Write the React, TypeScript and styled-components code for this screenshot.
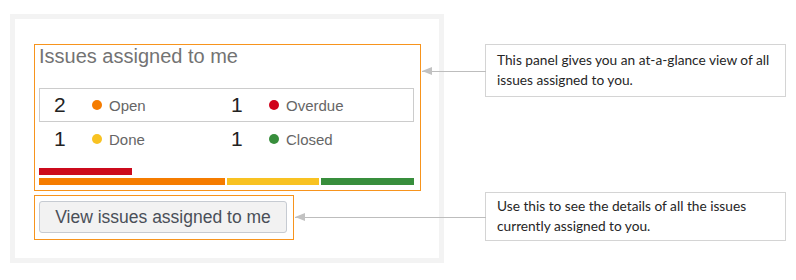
import React from "react";
import styled, { createGlobalStyle } from "styled-components";

interface Stat {
  count: number;
  label: string;
  color: string;
}

const rows: Stat[][] = [
  [
    { count: 2, label: "Open", color: "#f57c00" },
    { count: 1, label: "Overdue", color: "#d0021b" },
  ],
  [
    { count: 1, label: "Done", color: "#f8c222" },
    { count: 1, label: "Closed", color: "#388e3c" },
  ],
];

const App: React.FC = () => {
  return (
    <Page>
      <GlobalStyle />
      <Panel>
        <Highlight>
          <Title>Issues assigned to me</Title>
          <Stats>
            {rows.map((row, i) => (
              <StatRow key={i} $bordered={i === 0}>
                {row.map((s) => (
                  <React.Fragment key={s.label}>
                    <Count>{s.count}</Count>
                    <Label>
                      <Dot $color={s.color} />
                      {s.label}
                    </Label>
                  </React.Fragment>
                ))}
              </StatRow>
            ))}
          </Stats>
          <Bars>
            <BarRow>
              <Bar $color="#cc0a1c" $grow={1} />
              <Spacer />
            </BarRow>
            <BarRow>
              <Bar $color="#f57c00" $grow={2} />
              <Bar $color="#f8c222" $grow={1} />
              <Bar $color="#388e3c" $grow={1} />
            </BarRow>
          </Bars>
        </Highlight>
        <ButtonHighlight>
          <ViewButton>View issues assigned to me</ViewButton>
        </ButtonHighlight>
      </Panel>
      <Notes>
        <Callout $pad="5px 11px 6px">
          <Arrow $length={64} />
          This panel gives you an at-a-glance view of all issues assigned to
          you.
        </Callout>
        <Callout $pad="3px 11px 4px">
          <Arrow $length={191} />
          Use this to see the details of all the issues currently assigned to
          you.
        </Callout>
      </Notes>
    </Page>
  );
};

const GlobalStyle = createGlobalStyle`
  body {
    margin: 0;
    background: #ffffff;
    font-family: "Liberation Sans", Arial, sans-serif;
  }
`;

const Page = styled.div`
  display: flex;
  align-items: flex-start;
  padding: 14px 0 0 10px;
  gap: 41px;
`;

const Panel = styled.div`
  box-sizing: border-box;
  width: 434px;
  height: 249px;
  border: 5px solid #f3f3f3;
  padding: 25px 0 0 19px;
  display: flex;
  flex-direction: column;
  gap: 4px;
  font-family: "Liberation Sans", Arial, sans-serif;
`;

const Highlight = styled.div`
  width: 376px;
  border: 1px solid #f7941d;
  padding: 0 5px 5px 4px;
`;

const Title = styled.div`
  font-size: 20px;
  line-height: 23px;
  color: #737373;
`;

const Stats = styled.div`
  margin-top: 20px;
  width: 375px;
`;

const StatRow = styled.div<{ $bordered: boolean }>`
  display: grid;
  grid-template-columns: 38px 139px 38px 1fr;
  align-items: center;
  height: 34px;
  box-sizing: border-box;
  padding-left: 14px;
  border: 1px solid ${(p) => (p.$bordered ? "#cccccc" : "transparent")};
`;

const Count = styled.span`
  font-size: 21px;
  color: #222222;
`;

const Label = styled.span`
  display: flex;
  align-items: center;
  gap: 7px;
  font-size: 15px;
  color: #666666;
`;

const Dot = styled.span<{ $color: string }>`
  width: 10px;
  height: 10px;
  border-radius: 50%;
  background: ${(p) => p.$color};
`;

const Bars = styled.div`
  margin-top: 12px;
  width: 375px;
  display: flex;
  flex-direction: column;
  gap: 3px;
`;

const BarRow = styled.div`
  display: flex;
  gap: 2px;
`;

const Bar = styled.div<{ $color: string; $grow: number }>`
  flex: ${(p) => p.$grow} 1 0;
  height: 7px;
  background: ${(p) => p.$color};
`;

const Spacer = styled.div`
  flex: 3 1 0;
`;

const ButtonHighlight = styled.div`
  align-self: flex-start;
  border: 1px solid #f7941d;
  padding: 5px 6px 6px 4px;
`;

const ViewButton = styled.button`
  display: block;
  height: 32px;
  width: 248px;
  padding: 0;
  white-space: nowrap;
  border: 1px solid #c6cbd2;
  border-radius: 3px;
  background: #f2f2f2;
  font-family: "Liberation Sans", Arial, sans-serif;
  font-size: 17.5px;
  color: #4a4f58;
`;

const Notes = styled.div`
  margin-top: 30px;
  display: flex;
  flex-direction: column;
  gap: 95px;
`;

const Callout = styled.div<{ $pad: string }>`
  position: relative;
  width: 277px;
  border: 1px solid #d4d4d4;
  padding: ${(p) => p.$pad};
  font-family: Lato, "Open Sans", sans-serif;
  font-size: 13.7px;
  line-height: 20px;
  color: #262626;
`;

const Arrow = styled.span<{ $length: number }>`
  position: absolute;
  right: 100%;
  top: 50%;
  width: ${(p) => p.$length}px;
  height: 1px;
  background: #bdbdbd;

  &::before {
    content: "";
    position: absolute;
    left: 0;
    top: -4px;
    border-right: 10px solid #c2c2c2;
    border-top: 4.5px solid transparent;
    border-bottom: 4.5px solid transparent;
  }
`;

export default App;
